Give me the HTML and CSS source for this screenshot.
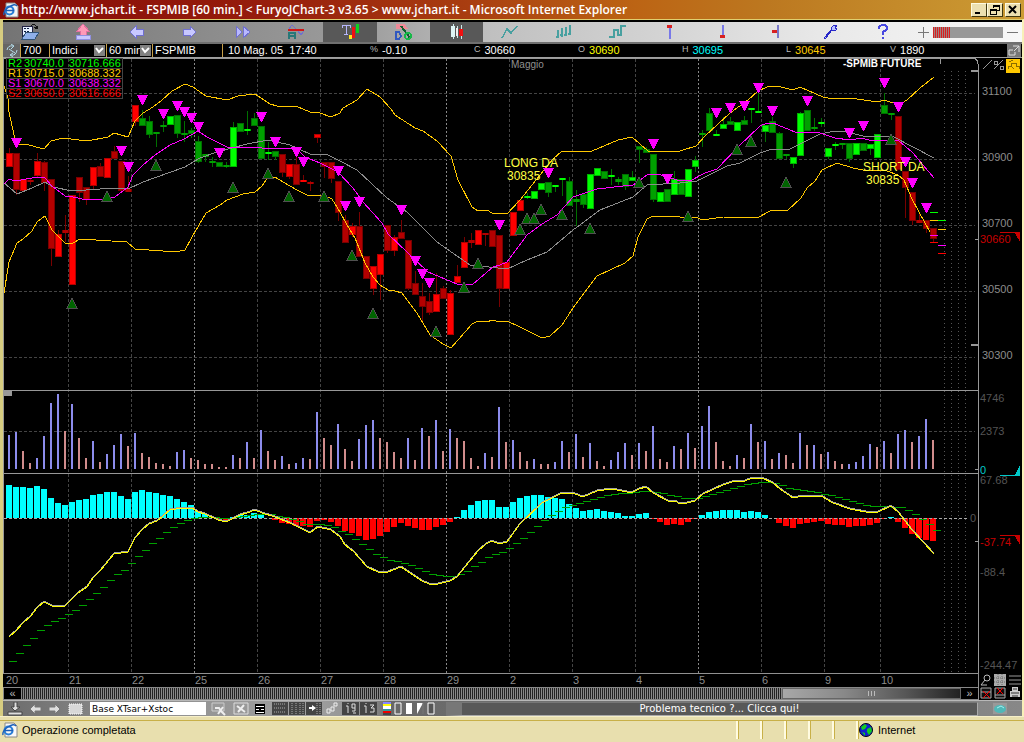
FILE: index.html
```html
<!DOCTYPE html>
<html lang="it">
<head>
  <meta charset="UTF-8">
  <title>FSPMIB [60 min.] - FuryoJChart-3</title>
  <link rel="stylesheet" href="styles.css">
</head>
<body>

  <header class="titlebar">
    <svg class="ie-icon" viewBox="0 0 16 16" width="16" height="16">
      <path d="M3 1h9l3 3v11H3z" fill="#f4f4f4" stroke="#888" stroke-width="1"/>
      <circle cx="6.500" cy="8.500" r="4" fill="none" stroke="#2a7fd8" stroke-width="2.200"/>
      <path d="M3 8.500h8M1 13Q0 9 6 5t8-1" fill="none" stroke="#1d5fb8" stroke-width="1.400"/>
    </svg>
    <h1>http://www.jchart.it - FSPMIB [60 min.] &lt; FuryoJChart-3 v3.65 &gt; www.jchart.it - Microsoft Internet Explorer</h1>
    <div class="window-buttons">
      <button aria-label="Minimize"><svg viewBox="0 0 12 10" width="12" height="10"><path d="M2 7h5v2H2z"/></svg></button>
      <button aria-label="Restore"><svg viewBox="0 0 12 10" width="12" height="10"><path d="M4 0h7v6H8V5h2V2H5v1H4zM1 4h7v6H1zM2 6v3h5V6z" fill-rule="evenodd"/></svg></button>
      <button class="close" aria-label="Close"><svg viewBox="0 0 12 10" width="12" height="10"><path d="M2 1l7 7M9 1L2 8" stroke="#000" stroke-width="2"/></svg></button>
    </div>
  </header>

  <main class="applet">
    <nav class="toolbar">
      <div class="tools">
        <button aria-label="Open"><svg viewBox="0 0 18 18" width="18" height="18"><path d="M1 3h10v13H1z" fill="#e8f0ff" stroke="#224"/><path d="M3 5h2v1H3zM6 5h2v1H6zM3 8h2v1H3zM6 8h2v1H6z" fill="#124"/><path d="M5 9h13l-4 7H1z" fill="#8fb0ea" stroke="#357"/><path d="M10 3q4-4 6 2m-3-1l3 2 1-3" fill="none" stroke="#111"/></svg></button>
        <button aria-label="Upload"><svg viewBox="0 0 18 18" width="18" height="18"><path d="M9 1l6 7h-3v4H6V8H3z" fill="#ff9ab8" stroke="#e070a0"/><path d="M2 12h14v4H2z" fill="#c8c8ff" stroke="#9090e0"/></svg></button>
        <button aria-label="Back"><svg viewBox="0 0 18 18" width="18" height="18"><path d="M3 9l6-6v3h7v6H9v3z" fill="#c8c8ff" stroke="#7070d0"/></svg></button>
        <button aria-label="Forward"><svg viewBox="0 0 18 18" width="18" height="18"><path d="M15 9L9 3v3H2v6h7v3z" fill="#c8c8ff" stroke="#7070d0"/></svg></button>
        <button aria-label="Last"><svg viewBox="0 0 18 18" width="18" height="18"><path d="M2 3l6 6-6 6zM9 3l7 6-7 6z" fill="#b8b8ff" stroke="#7070d0"/></svg></button>
        <button aria-label="Auto scale"><svg viewBox="0 0 18 18" width="18" height="18"><path d="M2 6l3-4 4 4M11 8l3 4 3-4" fill="none" stroke="#7070d0"/><path d="M1 6h16v2H1z" fill="#d01818"/><path d="M2 16v-6h6v6M2 13h6" fill="none" stroke="#287878" stroke-width="1.500"/></svg></button>
        <button class="active" aria-label="Text on chart"><svg viewBox="0 0 18 18" width="18" height="18"><path d="M1 2h8v3M1 2v3M5 2v9M3 11h4" fill="none" stroke="#b8b8ff"/><path d="M11 4h3v11h-3z" fill="#f01010"/><path d="M15 1h3v9h-3z" fill="#10d020"/><path d="M8 12h3v4H8z" fill="#ffe820"/></svg></button>
        <button aria-label="Draw"><svg viewBox="0 0 18 18" width="18" height="18"><path d="M2 1h9l3 5H2z" fill="#ef8a98"/><path d="M2 9v7h3l2-3-2-4z" fill="none" stroke="#3058c0" stroke-width="1.500"/><path d="M7 3l9 12" stroke="#106030" stroke-width="2"/><circle cx="14" cy="13" r="3" fill="none" stroke="#18b848" stroke-width="2"/></svg></button>
        <button class="active" aria-label="Candlesticks"><svg viewBox="0 0 18 18" width="18" height="18"><path d="M5 1v15M13 2v14M9 3v12" stroke="#cfeaea"/><path d="M3 3h4v11H3z" fill="#dff4f4"/><path d="M8 5h2v8H8z" fill="#eee"/><path d="M11 6h4v7h-4z" fill="#f01010"/></svg></button>
        <button aria-label="Line"><svg viewBox="0 0 18 18" width="18" height="18"><path d="M1 15l5-9 4 4 6-7" fill="none" stroke="#48a0a0" stroke-width="1.500"/></svg></button>
        <button aria-label="Bars"><svg viewBox="0 0 18 18" width="18" height="18"><path d="M4 7v8M8 5v9M12 4v9M16 2v10M2 14h2M6 12h2M10 12h2M14 11h2" stroke="#48a0a0" stroke-width="1.500"/></svg></button>
        <button aria-label="Steps"><svg viewBox="0 0 18 18" width="18" height="18"><path d="M1 14h5V7h4v5h3V3h5" fill="none" stroke="#48a0a0" stroke-width="1.500"/></svg></button>
        <button aria-label="Top marker"><svg viewBox="0 0 18 18" width="18" height="18"><path d="M8 5h2v11H8z" fill="#7878e8"/><path d="M6 2h5v3H6z" fill="#d82020"/></svg></button>
        <button aria-label="Bottom marker"><svg viewBox="0 0 18 18" width="18" height="18"><path d="M8 2h2v11H8z" fill="#7878e8"/><path d="M6 12h5v3H6z" fill="#d82020"/></svg></button>
        <button aria-label="Side marker"><svg viewBox="0 0 18 18" width="18" height="18"><path d="M9 2h2v13H9z" fill="#7878c8"/><path d="M4 7h5v3H4z" fill="#d82020"/></svg></button>
        <button aria-label="Settings"><svg viewBox="0 0 18 18" width="18" height="18"><path d="M3 15l8-9q-1-4 5-4l-2 3 2 1q-2 3-5 1l-7 9z" fill="#b8c0ff" stroke="#2828c8"/></svg></button>
        <button aria-label="Help"><svg viewBox="0 0 18 18" width="18" height="18"><path d="M5 6q0-4 4-4t4 3q0 2-4 4v3M9 14v2" fill="none" stroke="#4848e0" stroke-width="2"/></svg></button>
      </div>
      <div class="zoomer">
        <button aria-label="Zoom in"><svg viewBox="0 0 11 11" width="11" height="11"><path d="M5 0h1v5h5v1H6v5H5V6H0V5h5z" fill="#777"/></svg></button>
        <input type="range" min="0" max="100" value="25" aria-label="Zoom">
        <button aria-label="Zoom out"><svg viewBox="0 0 11 11" width="11" height="11"><path d="M0 5h11v1H0z" fill="#777"/></svg></button>
      </div>
    </nav>

    <form class="quote">
      <button type="button" class="refresh" aria-label="Refresh"><svg viewBox="0 0 14 13" width="14" height="13"><path d="M2 6q1-5 6-4M6 0l3 2-3 3M12 6q-1 6-6 5M8 9l-3 2 3 2M4 5l6 4" fill="none" stroke="#b4dcea"/></svg></button>
      <input class="cell count" type="text" value="700" aria-label="Bars">
      <span class="cell market">
        <select aria-label="Market"><option>Indici</option></select>
        <svg viewBox="0 0 11 11" width="11" height="11"><path d="M0 0h11v11H0z" fill="#808080"/><path d="M2 3l3 4 4-4" fill="none" stroke="#fff" stroke-width="2"/></svg>
      </span>
      <span class="cell period">
        <select aria-label="Period"><option>60 min.</option></select>
        <svg viewBox="0 0 11 11" width="11" height="11"><path d="M0 0h11v11H0z" fill="#808080"/><path d="M2 3l3 4 4-4" fill="none" stroke="#fff" stroke-width="2"/></svg>
      </span>
      <input class="cell symbol" type="text" value="FSPMIB" aria-label="Symbol">
      <span class="cell date">10 Mag. 05&nbsp; 17:40</span>
      <dl class="values">
        <div><dt>%</dt><dd>-0.10</dd></div>
        <div><dt>C</dt><dd>30660</dd></div>
        <div><dt>O</dt><dd class="yellow">30690</dd></div>
        <div><dt>H</dt><dd class="cyan">30695</dd></div>
        <div><dt>L</dt><dd class="orange">30645</dd></div>
        <div><dt>V</dt><dd>1890</dd></div>
      </dl>
      <button type="button" class="detach" aria-label="Detach"><svg viewBox="0 0 14 13" width="14" height="13"><path d="M0 0h14v13H0z" fill="#777"/><path d="M6 2h6v6M12 2L7 7M6 6H2v5h6V8" fill="none" stroke="#ddd"/></svg></button>
    </form>

    <section class="chart-area">
      <svg class="chart" id="chart" viewBox="3 58 1019 615" preserveAspectRatio="xMinYMin meet">
        <g id="grid"></g>
        <g id="volume"></g>
        <g id="histogram"></g>
        <g id="candles"></g>
        <g id="lines"></g>
        <g id="signals"></g>

        <!-- pivots -->
        <g class="pivots">
          <path d="M930 212h8M938 220h8" stroke="#00ff00"/>
          <path d="M930 220h8M938 229h8" stroke="#ffcc00"/>
          <path d="M930 235h8M938 245h8" stroke="#ff00ff"/>
          <path d="M930 242h8M938 253h8" stroke="#ff0000"/>
        </g>

        <!-- frames and axis -->
        <g class="frames">
          <path d="M3 58h970q5 1 5 6v609M3 390h975M3 473h975M3 58v615M940 58v6"/>
          <path d="M971 71h7M971 345h7" stroke-width="2"/>
          <path d="M975 239h3M975 469h3M975 541h3"/>
          <path d="M4 391h7v4H4z" fill="#999"/>
        </g>

        <text class="month" x="511" y="68">Maggio</text>
        <text class="future" x="843" y="67">-SPMIB FUTURE</text>
        <text class="note" x="504" y="167">LONG DA</text>
        <text class="note" x="507" y="180">30835</text>
        <text class="note" x="863" y="171">SHORT DA</text>
        <text class="note" x="866" y="184">30835</text>

        <g class="scale">
          <text x="982" y="95">31100</text>
          <text x="982" y="161">30900</text>
          <text x="982" y="227">30700</text>
          <text x="982" y="293">30500</text>
          <text x="982" y="359">30300</text>
          <text class="down" x="980" y="243">30660</text>
        </g>
        <g class="scale dim">
          <text x="980" y="402">4746</text>
          <text x="980" y="435">2373</text>
          <text class="zero" x="980" y="474">0</text>
          <text x="980" y="484">67.68</text>
          <text x="970" y="522">0</text>
          <text class="down" x="980" y="546">-37.74</text>
          <text x="980" y="576">-88.4</text>
          <text x="980" y="669">-244.47</text>
        </g>
        <path d="M1000 232h20v10l-5-9h-15zM1000 535h20v10l-5-9h-15z" fill="#c80000"/>
        <path d="M1000 476h20v-11l-5 10h-15z" fill="#00c8c8"/>

        <g class="scale-buttons">
          <path d="M983 69l9-9" stroke="#999" fill="none"/>
          <path d="M994 61h3v3h-3zM1000 66h3v3h-3zM994 69l9-9" stroke="#999" fill="none"/>
          <path d="M1006 59h14v14h-14z" fill="#ffc800"/>
          <path d="M1008 69v-3h3v-3h5v3h3v3M1011 66l3 3M1009 62l4-2" stroke="#8a6c00" fill="none"/>
        </g>
      </svg>

      <table class="levels">
        <tr class="r2"><th>R2</th><td>30740.0</td><td>30716.666</td></tr>
        <tr class="r1"><th>R1</th><td>30715.0</td><td>30688.332</td></tr>
        <tr class="s1"><th>S1</th><td>30670.0</td><td>30638.332</td></tr>
        <tr class="s2"><th>S2</th><td>30650.0</td><td>30616.666</td></tr>
      </table>
    </section>

    <section class="timeline">
      <div class="timeline-main">
        <svg class="dates" id="dates" viewBox="3 673 975 14" preserveAspectRatio="xMinYMin meet"></svg>
        <div class="scroller">
          <button aria-label="Scroll left">«</button>
          <div class="track"><div class="thumb"><i></i></div></div>
          <button aria-label="Scroll right">»</button>
        </div>
      </div>
      <div class="corner">
        <button aria-label="Search"><svg viewBox="0 0 12 12" width="12" height="12"><circle cx="7" cy="4" r="3" fill="none" stroke="#bbb"/><path d="M5 6l-4 5h6" stroke="#bbb" fill="none"/></svg></button>
        <button aria-label="Grid"><svg viewBox="0 0 12 12" width="12" height="12"><path d="M0 0h12v12H0z" fill="#aaa"/><path d="M0 4h12M0 8h12M4 0v12M8 0v12" stroke="#666" stroke-dasharray="1 1"/></svg></button>
        <button aria-label="List"><svg viewBox="0 0 12 12" width="12" height="12"><path d="M0 2h12M0 6h12M0 10h12" stroke="#999"/></svg></button>
        <button aria-label="Remove line"><svg viewBox="0 0 12 12" width="12" height="12"><path d="M1 1h10v10H1zM1 5h10" fill="#111" stroke="#aaa"/><path d="M3 4l7 7M10 4l-7 7" stroke="#f00"/></svg></button>
        <button aria-label="Remove text"><svg viewBox="0 0 12 12" width="12" height="12"><path d="M1 1h10v10H1zM1 8h10" fill="#111" stroke="#aaa"/><path d="M3 1l6 6M9 1L3 7" stroke="#f00"/></svg></button>
        <button aria-label="Print"><svg viewBox="0 0 12 12" width="12" height="12"><path d="M3 0h6v4h2v6H1V4h2z" fill="#ccc"/><path d="M4 2h4M2 6h8M3 9h6" stroke="#333"/></svg></button>
      </div>
    </section>

    <section class="bottombar">
      <button class="save" aria-label="Save"><svg viewBox="0 0 16 14" width="16" height="14"><path d="M7 0h3v5h3l-5 4-4-4h3zM1 10h14v3H1z" fill="#ddd" stroke="#444" stroke-width="1"/></svg></button>
      <button class="undo" aria-label="Undo"><svg viewBox="0 0 12 12" width="12" height="12"><path d="M0 6l5-5v3h6v4H5v3z" fill="#ddd" stroke="#777"/></svg></button>
      <button class="redo" aria-label="Redo"><svg viewBox="0 0 12 12" width="12" height="12"><path d="M12 6L7 1v3H1v4h6v3z" fill="#ddd" stroke="#777"/></svg></button>
      <button class="note-btn" aria-label="Note"><svg viewBox="0 0 16 12" width="16" height="12"><path d="M1 1h13v10H1z" fill="#d8d8d8" stroke="#fff" stroke-dasharray="1 1"/></svg></button>
      <input class="layout" type="text" value="Base XTsar+Xstoc" aria-label="Layout">
      <div class="layout-tools">
        <button aria-label="Add"><svg viewBox="0 0 16 14" width="16" height="14"><path d="M1 1h12v8H1z" fill="#999" stroke="#ccc"/><path d="M4 6h4l2 3 4 4M12 5l-5 7" stroke="#eee" stroke-width="2" fill="none"/></svg></button>
        <button aria-label="Cancel"><svg viewBox="0 0 16 14" width="16" height="14"><path d="M1 1h14v11H1z" fill="#999" stroke="#ddd"/><path d="M4 4l8 6M11 3l-6 7" stroke="#eee" stroke-width="2"/></svg></button>
        <button aria-label="Window"><svg viewBox="0 0 10 10" width="10" height="10"><path d="M0 0h10v10H0z"/><path d="M1 2h8v1H1zM1 5h3v1H1zM6 5h3v1H6zM1 8h8v1H1z" fill="#fff"/></svg></button>
      </div>
      <div class="dark-tools">
        <button aria-label="Horizontal grid"><svg viewBox="0 0 16 13" width="16" height="13"><path d="M2 2h12M2 6h12M2 10h12" stroke="#aaa" stroke-dasharray="1 1"/></svg></button>
        <button aria-label="Vertical grid"><svg viewBox="0 0 16 13" width="16" height="13"><path d="M3 1v11M7 1v11M11 1v11M14 1v11" stroke="#aaa" stroke-dasharray="1 1"/></svg></button>
        <button aria-label="Cursor"><svg viewBox="0 0 16 13" width="16" height="13"><path d="M3 5h3V3l4 3-4 3V7H3z" fill="#fff"/><path d="M11 1v11M14 1v11" stroke="#aaa" stroke-dasharray="1 1"/></svg></button>
      </div>
      <button class="link" aria-label="Link"><svg viewBox="0 0 12 13" width="12" height="13"><path d="M1 7h3v4H1zM5 5h3v4H5zM8 1h3v3H8z" stroke="#eee" fill="none"/></svg></button>
      <div class="dark-tools">
        <button aria-label="Info 9"><svg viewBox="0 0 17 13" width="17" height="13"><path d="M4 4h2v7M6 1v1M10 2h3v4h-3zM13 6v3h-3M11 11h3" stroke="#ddd" fill="none"/></svg></button>
        <button aria-label="Info 3"><svg viewBox="0 0 17 13" width="17" height="13"><path d="M4 4h2v7M6 1v1M10 3h4l-3 3h3v4h-4" stroke="#ddd" fill="none"/></svg></button>
      </div>
      <div class="shape-tools">
        <button aria-label="Colours"><svg viewBox="0 0 8 13" width="8" height="13"><path d="M0 0h8v2H0z" fill="#88f"/><path d="M0 2h8v2H0z" fill="#ff0"/><path d="M0 4h8v3H0z" fill="#fff"/><path d="M0 7h8v2H0z" fill="#399"/><path d="M0 9h8v2H0z" fill="#e00"/><path d="M0 11h8v2H0z" fill="#444"/></svg></button>
        <button aria-label="Hollow"><svg viewBox="0 0 8 13" width="8" height="13"><path d="M1 1h6v11H1z" fill="none" stroke="#fff"/></svg></button>
        <button aria-label="Filled"><svg viewBox="0 0 8 13" width="8" height="13"><path d="M1 1h6v11H1z" fill="#fff"/></svg></button>
        <button aria-label="Half"><svg viewBox="0 0 8 13" width="8" height="13"><path d="M1 1h6L1 12z" fill="#fff"/><path d="M7 1v11" stroke="#777"/></svg></button>
        <button aria-label="Dark"><svg viewBox="0 0 8 13" width="8" height="13"><path d="M1 1h6v11H1z" fill="#555" stroke="#fff"/></svg></button>
      </div>
      <button class="banner">Problema tecnico ?... Clicca qui!</button>
      <div class="gem"><svg viewBox="0 0 16 13" width="16" height="13"><path d="M1 1h14v11H1z" fill="#999"/><ellipse cx="8" cy="7" rx="6" ry="4" fill="#50b8b8"/><path d="M5 6l4-2 3 2" stroke="#a8f0f0" fill="none"/></svg></div>
    </section>
  </main>

  <footer class="statusbar">
    <div class="status-text">
      <svg class="ie-icon" viewBox="0 0 16 16" width="16" height="16">
        <path d="M3 1h9l3 3v11H3z" fill="#f8f8f8" stroke="#888"/>
        <circle cx="6.500" cy="8.500" r="4" fill="none" stroke="#2a7fd8" stroke-width="2.200"/>
        <path d="M3 8.500h8M1 13Q0 9 6 5t8-1" fill="none" stroke="#1d5fb8" stroke-width="1.400"/>
      </svg>
      <span>Operazione completata</span>
    </div>
    <div class="pane"></div>
    <div class="pane"></div>
    <div class="pane"></div>
    <div class="pane"></div>
    <div class="pane"></div>
    <div class="pane zone">
      <svg viewBox="0 0 14 14" width="14" height="14"><circle cx="7" cy="7" r="6.500" fill="#1020d0" stroke="#001"/><path d="M2 4l4-3 2 2-2 3-3 1zM8 6l4-2 1 4-3 4-2-3zM3 9l3 1v3z" fill="#10d020"/></svg>
      <span>Internet</span>
    </div>
  </footer>

  <script src="chart.js"></script>
</body>
</html>
```

FILE: styles.css
```css
* {
  box-sizing: border-box;
}

body {
  margin: 0;
  min-height: 100vh;
  display: flex;
  flex-direction: column;
  background: #e8dfae;
  font-family: "Liberation Sans", Arial, sans-serif;
  font-size: 11px;
  color: #000;
}

button {
  margin: 0;
  padding: 0;
  border: none;
  background: none;
  font: inherit;
  color: inherit;
  display: flex;
  align-items: center;
  justify-content: center;
  cursor: pointer;
}

input, select {
  margin: 0;
  padding: 0;
  border: none;
  border-radius: 0;
  font: inherit;
  color: inherit;
  background: none;
  outline: none;
  appearance: none;
}

svg {
  display: block;
  flex: none;
}

/* title bar */
.titlebar {
  height: 19px;
  padding: 0 3px;
  display: flex;
  align-items: center;
  gap: 2px;
  background: linear-gradient(90deg, #860c08 0%, #961c0c 25%, #a83c10 45%, #bc6414 62%, #bc7820 75%, #cc9c34 100%);
  color: #fff;
}

.titlebar h1 {
  margin: 0;
  flex: 1;
  font-family: "Open Sans", sans-serif;
  font-size: 12px;
  line-height: 16px;
  font-weight: 600;
  white-space: nowrap;
  overflow: hidden;
}

.window-buttons {
  display: flex;
}

.window-buttons button {
  width: 16px;
  height: 14px;
  background: #ece0b0;
  border: 1px solid #fffbe0;
  border-right-color: #403810;
  border-bottom-color: #403810;
}

.window-buttons .close {
  margin-left: 2px;
}

/* applet frame */
.applet {
  background: #000;
  border-top: 1px solid #e0d070;
  border-left: 3px solid #d6cc80;
  border-right: 2px solid #f8f0b8;
  padding-top: 2px;
  color: #fff;
}

.toolbar {
  height: 22px;
  display: flex;
  justify-content: space-between;
  border-bottom: 2px solid #707070;
  background: linear-gradient(90deg, #747474 0%, #868686 15%, #9c9c9c 35%, #c0c0c0 48%, #d4d4d4 65%, #e8e8e8 80%, #f8f8f8 100%);
}

.tools {
  flex: 1;
  display: flex;
}

.tools button {
  flex: 1;
}

.tools svg, .zoomer svg {
  shape-rendering: crispEdges;
}

.tools .active {
  background: #585858;
}

.zoomer {
  flex: none;
  width: 112px;
  display: flex;
  align-items: center;
  justify-content: flex-end;
  gap: 4px;
  padding-right: 4px;
}

.zoomer input {
  width: 70px;
  height: 11px;
  background: repeating-linear-gradient(90deg, #d82020 0, #d82020 1px, #a08080 1px, #a08080 2px) left / 17px 100% no-repeat #989898;
}

.zoomer input::-webkit-slider-thumb {
  appearance: none;
  width: 1px;
}

/* quote row */
.quote {
  height: 14px;
  display: flex;
  border-bottom: 1px solid #a0a0a0;
  line-height: 13px;
}

.refresh {
  width: 17px;
  background: #666;
}

.cell {
  border-left: 1px solid #c8a048;
  padding-left: 2px;
  position: relative;
}

.count {
  width: 29px;
}

.market {
  width: 57px;
}

.period {
  width: 46px;
}

.market, .period {
  display: flex;
  align-items: center;
}

.cell select {
  width: 100%;
}

.cell svg {
  position: absolute;
  right: 1px;
  top: 1px;
  pointer-events: none;
}

.symbol {
  width: 70px;
}

.date {
  width: 148px;
  padding-left: 5px;
}

.values {
  flex: 1;
  margin: 0;
  display: flex;
}

.values div {
  flex: 1;
  display: flex;
  gap: 4px;
}

.values dt {
  font-size: 9px;
  line-height: 11px;
  color: #b8b8b8;
}

.values dd {
  margin: 0;
}

.yellow {
  color: #ffff00;
}

.cyan {
  color: #00ffff;
}

.orange {
  color: #ffcc00;
}

.detach {
  width: 28px;
  justify-content: flex-end;
  padding-right: 1px;
}

/* chart */
.chart-area {
  position: relative;
}

.chart {
  width: 100%;
  height: auto;
  shape-rendering: crispEdges;
}

.chart text, .dates text {
  font-size: 11px;
}

.chart .month {
  font-size: 10px;
  fill: #909090;
}

.chart .future {
  font-size: 10px;
  font-weight: bold;
  fill: #fff;
}

.chart .note {
  font-size: 12px;
  fill: #ffff40;
}

.scale {
  fill: #8c8c8c;
}

.scale.dim {
  fill: #545454;
}

.scale .down {
  fill: #c80000;
}

.scale .zero {
  fill: #00c8c8;
}

.frames {
  fill: none;
  stroke: #989898;
}

.gridline {
  stroke: #444;
  stroke-dasharray: 3 2;
}

.gridline.week {
  stroke: #888;
  stroke-dasharray: 2 2;
}

.gridline.next {
  stroke: #555;
  stroke-dasharray: 1 3;
}

.gridline.zero-line {
  stroke: #aaa;
}

.line {
  fill: none;
  stroke-width: 1;
}

.levels {
  position: absolute;
  top: 0;
  left: 3px;
  border-collapse: collapse;
  border: 1px solid #444;
  font-size: 11px;
  line-height: 9px;
}

.levels tr {
  border-bottom: 1px solid #444;
}

.levels th, .levels td {
  padding: 0 1px;
  font-weight: normal;
  text-align: left;
}

.levels td:last-child {
  padding-left: 4px;
}

.r2 {
  color: #00ff00;
}

.r1 {
  color: #ffcc00;
}

.s1 {
  color: #ff00ff;
}

.s2 {
  color: #ff0000;
}

/* dates and scroll bar */
.timeline {
  display: flex;
}

.timeline-main {
  flex: 1;
  border-right: 1px solid #909090;
}

.dates {
  width: 100%;
  height: 14px;
  fill: #8c8c8c;
}

.scroller {
  height: 13px;
  display: flex;
  border: 1px solid #888;
  border-right: none;
  color: #bbb;
}

.scroller button {
  width: 17px;
  line-height: 9px;
}

.track {
  flex: 1;
  display: flex;
  justify-content: flex-end;
  background: repeating-linear-gradient(90deg, #888 0, #888 1px, #222 1px, #222 2px);
}

.thumb {
  width: 19%;
  display: flex;
  align-items: center;
  justify-content: center;
  background: linear-gradient(90deg, #a8a8a8, #888 35%, #555 70%, #222);
  border: 1px solid #666;
}

.thumb i {
  width: 7px;
  height: 5px;
  background: repeating-linear-gradient(90deg, #bbb 0, #bbb 1px, transparent 1px, transparent 3px);
}

.corner {
  width: 43px;
  display: grid;
  grid-template-columns: repeat(3, 1fr);
}

/* bottom toolbar */
.bottombar {
  height: 16px;
  display: flex;
  align-items: center;
  border-top: 1px solid #b8b8b8;
  background: linear-gradient(90deg, #6c6c6c 0%, #8c8c8c 12%, #a0a0a0 30%, #909090 36%, #686868 38%, #888 100%);
}

.save {
  width: 24px;
}

.undo, .redo {
  width: 18px;
}

.note-btn {
  width: 26px;
}

.layout {
  width: 116px;
  height: 13px;
  margin: 0 4px 0 1px;
  padding-left: 2px;
  background: #fff;
  color: #000;
  font-family: "DejaVu Sans", sans-serif;
  font-size: 9px;
}

.layout-tools {
  display: flex;
  gap: 6px;
  margin-right: 7px;
  padding-left: 1px;
}

.dark-tools {
  display: flex;
  gap: 1px;
}

.dark-tools button {
  background: #444;
}

.link {
  width: 20px;
}

.shape-tools {
  display: flex;
  gap: 3px;
  padding: 0 11px 0 6px;
}

.banner {
  flex: 1;
  height: 14px;
  background: #585858;
  border: 1px solid #aaa;
  border-top-color: #777;
  border-left: 16px solid #777;
  font-family: "DejaVu Sans", sans-serif;
  font-size: 10px;
  line-height: 12px;
  color: #fff;
}

.gem {
  width: 44px;
  display: flex;
  justify-content: center;
}

/* status bar */
.statusbar {
  height: 26px;
  display: flex;
  align-items: center;
  border-top: 1px solid #f6efc8;
  background: linear-gradient(#e8dfae 3px, #c8b048 3px, #c8b048 4px, #e8dfae 4px);
}

.status-text {
  flex: 1;
  display: flex;
  align-items: center;
  gap: 4px;
  padding-left: 2px;
}

.pane {
  width: 24px;
  height: 18px;
  border-left: 2px solid #fffbe0;
  box-shadow: inset 1px 0 #c8b048;
}

.zone {
  width: 168px;
  display: flex;
  align-items: center;
  gap: 5px;
  padding-left: 1px;
}
```

FILE: chart.js
```js
const NS = "http://www.w3.org/2000/svg";
const STEP = 7;
const FIRST = 9;

function add(parent, name, attrs) {
  const el = document.createElementNS(NS, name);
  for (const key in attrs) el.setAttribute(key, attrs[key]);
  parent.appendChild(el);
  return el;
}

// [body top, body bottom, high, low, colour]
const candles = [
  [153,167,148,167,"r"],[153,190,153,195,"R"],[179,191,179,192,"r"],[180,182,179,185,"R"],[161,176,153,177,"r"],[162,183,161,191,"R"],
  [179,249,179,266,"R"],[234,257,230,257,"r"],[230,233,215,242,"R"],[195,285,195,285,"r"],[177,193,177,202,"R"],[187,200,187,205,"R"],
  [167,186,167,190,"r"],[166,177,163,177,"R"],[158,178,158,178,"r"],[151,159,146,159,"R"],[161,191,161,192,"R"],[189,192,176,192,"R"],
  [105,122,105,126,"r"],[118,126,110,126,"G"],[121,135,116,138,"G"],[132,134,132,147,"G"],[125,127,121,132,"G"],[116,125,116,125,"g"],
  [115,134,115,138,"G"],[133,135,121,142,"G"],[130,134,128,138,"G"],[141,162,136,163,"G"],[154,157,154,162,"G"],[161,163,157,167,"G"],
  [162,167,162,167,"G"],[165,167,162,168,"G"],[127,167,122,167,"g"],[123,132,123,132,"G"],[129,131,111,135,"g"],[118,126,113,126,"G"],
  [126,159,126,159,"G"],[152,154,142,160,"g"],[151,157,151,160,"G"],[154,173,154,177,"R"],[164,177,164,179,"r"],[164,185,155,185,"R"],
  [180,182,175,182,"r"],[182,184,181,191,"R"],[134,138,134,143,"r"],[162,167,162,178,"R"],[162,179,162,183,"R"],[181,213,181,221,"R"],
  [220,243,215,243,"R"],[226,235,223,237,"r"],[226,257,212,257,"R"],[256,279,256,279,"R"],[266,289,266,295,"r"],[254,275,254,300,"r"],
  [225,251,225,253,"R"],[237,251,235,256,"r"],[232,239,220,239,"R"],[240,289,240,290,"R"],[283,295,271,295,"R"],[296,307,283,322,"R"],
  [301,313,293,315,"R"],[294,312,273,312,"r"],[288,299,286,299,"R"],[293,335,290,335,"r"],[276,283,265,283,"r"],[242,268,237,268,"r"],
  [240,243,233,248,"R"],[230,245,230,245,"r"],[233,235,233,246,"R"],[230,247,230,247,"R"],[235,289,235,307,"R"],[262,289,262,289,"r"],
  [212,236,212,236,"r"],[200,211,200,211,"r"],[196,198,193,199,"g"],[191,199,191,199,"g"],[183,190,183,190,"g"],[182,193,182,197,"G"],
  [185,187,185,192,"g"],[178,180,178,196,"g"],[181,206,177,206,"G"],[199,202,190,226,"G"],[194,205,194,208,"G"],[174,209,174,209,"g"],
  [168,176,168,176,"g"],[171,179,171,179,"G"],[175,177,169,185,"g"],[179,182,177,185,"G"],[174,187,174,190,"G"],[177,181,171,181,"g"],
  [146,150,146,163,"G"],[149,153,147,153,"G"],[154,200,154,202,"G"],[192,202,192,202,"g"],[189,202,189,202,"G"],[179,195,171,195,"g"],
  [179,195,179,195,"G"],[169,197,169,197,"g"],[160,167,156,172,"g"],[133,135,130,147,"G"],[113,131,108,131,"G"],[134,136,130,136,"g"],
  [124,129,117,129,"g"],[121,125,117,125,"G"],[122,131,122,131,"g"],[120,125,116,125,"G"],[108,110,108,123,"g"],[111,113,92,113,"g"],
  [125,132,125,142,"g"],[121,133,117,133,"G"],[133,159,132,159,"G"],[154,156,154,159,"G"],[157,164,157,168,"g"],[113,156,112,156,"g"],
  [110,131,110,131,"G"],[127,129,118,131,"G"],[122,124,118,127,"g"],[148,157,148,159,"g"],[144,146,142,150,"g"],[143,145,143,149,"G"],
  [143,159,143,162,"G"],[143,155,143,155,"g"],[143,151,143,151,"G"],[144,149,144,155,"g"],[134,158,134,158,"g"],[105,114,93,114,"G"],
  [113,115,113,120,"G"],[116,170,116,170,"R"],[171,188,171,218,"R"],[192,221,192,225,"R"],[220,223,213,223,"R"],[220,229,220,233,"R"],
  [228,239,228,243,"R"]
];
const colours = { r: "#ff0000", R: "#b40000", g: "#00ff00", G: "#00a000" };
const edges = { r: "#b00000", R: "#780000", g: "#00b000", G: "#007000" };

// bar index, top of the arrow
const sell = [
  [1,138],[16,146],[17,162],[19,95],[22,109],[24,101],[25,107],[26,113],[27,122],[30,148],[36,112],[38,137],[41,147],[42,157],
  [47,166],[48,201],[50,197],[56,205],[58,256],[59,269],[60,278],[70,220],[77,168],[92,139],[94,174],[101,108],[103,103],[105,101],
  [107,83],[109,106],[114,96],[120,128],[122,121],[125,78],[127,102],[128,157],[129,178],[131,203]
];
const buy = [
  [9,298],[14,191],[21,160],[32,182],[37,168],[40,191],[45,191],[49,250],[52,308],[61,326],[65,282],[67,258],[73,224],[74,213],
  [75,213],[76,204],[79,209],[83,223],[90,177],[97,211],[104,144],[106,136],[111,177],[126,134]
];

const upperBand = "4,86 8,98 9,112 16,144 25,144 44,149 51,141 63,138 87,141 108,137 114,133 128,137 135,121 143,113 153,107 162,100 172,91 185,84 193,87 206,96 227,100 238,96 255,94 270,104 277,106 298,107 310,112 320,113 331,117 340,113 343,108 357,100 367,89 380,97 391,109 395,115 415,128 423,131 437,141 451,156 458,180 472,207 478,211 487,210 492,213 507,214 520,200 540,175 553,159 562,151 577,151 585,152 592,151 618,140 632,137 648,151 680,151 696,146 705,136 730,113 748,100 758,91 767,87 777,86 793,90 800,87 823,97 833,99 850,98 878,102 884,100 890,102 902,103 907,100 920,88 934,77";
const lowerBand = "4,293 9,262 17,243 23,239 32,231 37,222 45,216 52,230 65,243 73,243 80,239 127,242 135,249 163,251 180,251 185,250 192,237 206,213 220,205 227,200 243,194 255,192 262,186 268,177 275,177 283,182 297,190 307,195 325,196 332,199 340,212 347,225 355,238 365,263 373,277 380,285 388,290 395,291 402,293 417,313 430,335 443,344 451,348 472,324 478,321 487,322 492,320 500,322 507,321 520,327 542,338 550,336 562,325 573,308 597,276 625,263 633,256 638,237 647,219 653,216 667,216 680,217 696,217 702,220 723,217 757,218 772,210 787,211 801,198 807,188 815,181 822,170 837,163 853,168 863,170 887,171 898,175 904,180 912,199 925,223 930,232";
const fastAverage = "3,185 9,179 15,181 38,177 45,178 52,186 65,196 73,197 87,200 107,199 115,197 128,187 133,175 143,165 155,155 170,145 184,139 198,131 207,137 227,147 297,149 305,157 320,163 338,172 353,188 363,202 382,223 388,234 408,253 428,272 457,284 472,285 493,267 500,265 507,262 527,235 542,224 557,215 573,197 597,189 623,186 633,185 647,175 657,174 668,177 677,180 690,181 705,173 717,169 738,147 760,126 767,123 773,123 795,132 817,132 835,138 850,140 862,138 872,141 898,140 913,153 923,165 934,178";
const slowAverage = "3,182 17,194 32,188 45,182 53,187 72,191 100,189 113,188 128,189 143,182 185,167 200,158 217,152 247,144 268,140 290,145 310,154 328,155 340,161 357,170 387,198 407,212 437,242 470,265 507,269 527,260 547,252 573,230 600,210 633,197 647,185 680,183 697,181 727,166 740,163 760,153 772,149 788,150 820,134 835,131 847,132 863,136 892,136 913,147 934,158";
const oscillator = "9,637 16,631 23,623 31,616 37,608 44,602 52,606 58,607 65,606 78,593 87,587 93,578 100,571 114,554 128,552 135,538 142,530 149,524 157,521 170,510 182,508 192,508 198,512 205,514 218,520 226,522 240,515 247,513 255,510 262,513 275,517 290,523 310,533 318,527 331,530 340,537 345,545 353,551 367,567 378,572 388,572 401,567 422,581 429,584 438,584 450,581 457,577 465,567 478,551 486,544 492,541 499,544 507,542 520,524 542,503 562,493 575,494 583,497 597,491 612,489 627,492 633,492 639,489 646,487 653,493 668,501 675,501 680,504 687,503 695,501 703,494 723,485 732,482 745,481 752,478 762,478 773,483 780,489 793,498 803,496 814,497 821,496 833,503 850,509 871,513 878,512 891,506 898,512 912,530 934,554";

// y of the signal dash for each bar
const signal = [
  661,653,645,638,630,625,621,618,614,610,605,599,593,587,580,574,570,563,556,550,543,538,532,527,523,520,518,517,517,517,518,518,
  517,516,515,514,514,514,516,517,519,521,524,524,524,525,527,531,534,539,544,549,554,557,560,561,563,565,568,571,574,575,576,576,
  574,571,566,562,557,554,552,548,543,538,532,526,520,515,511,507,505,503,501,499,497,495,494,493,493,492,491,491,492,493,495,496,
  498,498,498,496,494,492,490,488,486,484,483,482,482,483,485,488,489,490,491,492,494,495,497,499,501,503,505,506,506,506,507,507,
  510,514,519,524,530
];

// negative means a falling bar
const volume = [
  34,37,-18,-6,11,33,66,75,-38,65,-31,-11,28,-7,15,24,35,-23,36,-16,-12,-6,-5,-3,17,19,-11,-9,-5,-5,-2,-2,14,-11,27,-11,39,-18,-9,
  13,-5,6,11,-10,57,-31,-24,45,-20,-8,30,44,49,-31,-27,-17,-11,31,-9,41,-33,49,-18,40,-31,-28,-11,-3,16,-12,62,-27,29,-17,-8,10,-5,
  -5,7,28,-17,35,-12,26,-8,-3,9,17,26,-14,26,-18,43,-10,-7,23,-20,36,-21,43,63,-27,-8,-3,14,-11,45,-27,28,-10,16,-14,-6,36,-24,24,
  -15,17,-8,-5,5,7,13,25,-22,28,-16,35,39,-27,33,50,-29
];

const histogram = [
  33,31,31,30,32,29,20,15,13,16,18,19,23,24,26,26,22,19,26,28,26,25,23,22,19,16,13,7,4,1,-1,-3,1,3,3,5,3,0,-2,-5,-6,-8,-8,-9,-3,-2,
  -4,-8,-13,-15,-18,-22,-21,-18,-14,-9,-5,-8,-10,-12,-12,-9,-7,-4,1,8,13,17,18,18,11,11,16,20,22,23,23,21,20,19,14,10,7,8,9,7,6,5,2,
  2,4,5,-1,-4,-7,-6,-7,-4,-1,3,6,7,8,8,8,6,7,6,3,0,-5,-8,-10,-6,-5,-4,-3,-6,-7,-7,-9,-8,-8,-7,-5,-1,1,-4,-10,-16,-20,-22,-23
];

const days = [
  [3,"20"],[68,"21"],[131,"22"],[194,"25"],[257,"26"],[320,"27"],[383,"28"],[446,"29"],
  [509,"2"],[572,"3"],[635,"4"],[698,"5"],[761,"6"],[824,"9"],[880,"10"]
];
const weekStarts = [194, 446, 698];

// grid
const grid = document.getElementById("grid");
days.slice(1).forEach(([x]) => {
  const week = weekStarts.includes(x) ? " week" : "";
  add(grid, "path", { class: "gridline" + week, d: `M${x + 0.5} 59V673` });
});
[944, 951, 958, 965].forEach(x => add(grid, "path", { class: "gridline next", d: `M${x + 0.5} 71V673` }));
[93, 159, 225, 291, 357, 431].forEach(y => add(grid, "path", { class: "gridline", d: `M4 ${y + 0.5}H975` }));

// volume
const volumeGroup = document.getElementById("volume");
volume.forEach((v, i) => {
  const h = Math.abs(v);
  add(volumeGroup, "rect", { x: FIRST - 1 + i * STEP, y: 469 - h, width: 2, height: h, fill: v > 0 ? "#8c8cec" : "#d08c8c" });
});

// histogram around the zero line
const histogramGroup = document.getElementById("histogram");
histogram.forEach((v, i) => {
  const h = Math.abs(v);
  add(histogramGroup, "rect", { x: FIRST - 3 + i * STEP, y: v > 0 ? 518 - h : 518, width: 6, height: h, fill: v > 0 ? "#00ffff" : "#ff0000" });
});
add(histogramGroup, "path", { class: "gridline zero-line", d: "M4 518.5H967" });

// candles
const candleGroup = document.getElementById("candles");
candles.forEach(([top, bottom, high, low, c], i) => {
  const x = FIRST + i * STEP;
  add(candleGroup, "rect", { x: x, y: high, width: 1, height: low - high, fill: edges[c.toUpperCase()] });
  add(candleGroup, "rect", { x: x - 3, y: top, width: 7, height: bottom - top, fill: edges[c] });
  if (bottom - top > 3) {
    add(candleGroup, "rect", { x: x - 2, y: top + 1, width: 5, height: bottom - top - 2, fill: colours[c] });
  } else {
    add(candleGroup, "rect", { x: x - 2, y: top, width: 5, height: bottom - top, fill: colours[c] });
  }
});

// lines
const lines = document.getElementById("lines");
add(lines, "polyline", { class: "line", points: slowAverage, stroke: "#8c8c8c" });
add(lines, "polyline", { class: "line", points: upperBand, stroke: "#ffc800" });
add(lines, "polyline", { class: "line", points: lowerBand, stroke: "#ffc800" });
add(lines, "polyline", { class: "line", points: fastAverage, stroke: "#ff00ff" });
signal.forEach((y, i) => add(lines, "rect", { x: FIRST + i * STEP, y: y, width: 8, height: 1, fill: "#00a000" }));
add(lines, "polyline", { class: "line", points: oscillator, stroke: "#a0a0a0", transform: "translate(0 -1)" });
add(lines, "polyline", { class: "line", points: oscillator, stroke: "#ffff00" });

// arrows
const signals = document.getElementById("signals");
buy.forEach(([i, y]) => {
  const x = FIRST + i * STEP;
  add(signals, "path", { d: `M${x} ${y}l5 10h-10z`, fill: "#006400", stroke: "#505050" });
});
sell.forEach(([i, y]) => {
  const x = FIRST + i * STEP;
  add(signals, "path", { d: `M${x - 5} ${y}h11l-5 10h-1z`, fill: "#ff00ff" });
});

// dates
const dates = document.getElementById("dates");
days.forEach(([x, label]) => {
  add(dates, "text", { x: x + (x === 3 ? 3 : 1), y: 684 }).textContent = label;
});
add(dates, "path", { d: "M3 673.5H978", stroke: "#909090" });
```
